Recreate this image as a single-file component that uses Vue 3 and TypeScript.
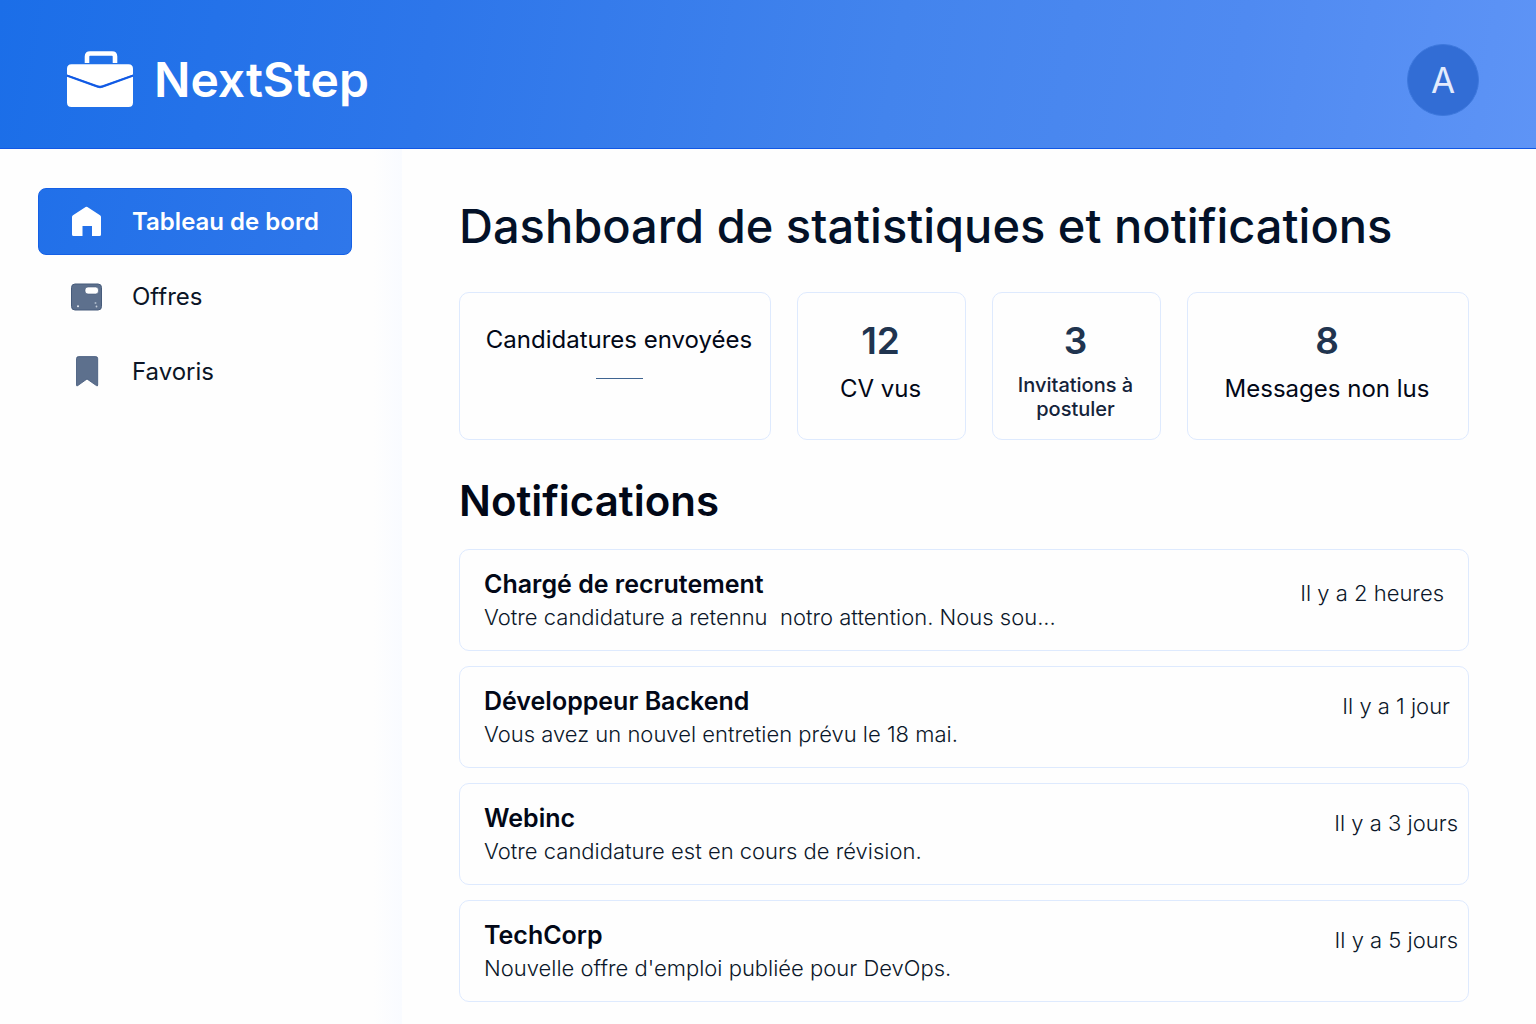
<script setup lang="ts">
interface NavItem {
  id: 'home' | 'offers' | 'favorites'
  label: string
  active: boolean
}

interface Stat {
  value: string | null
  label: string
  compact?: boolean
}

interface Notification {
  title: string
  text: string
  time: string
  inset: 'wide' | 'medium' | 'narrow'
}

const navItems: NavItem[] = [
  { id: 'home', label: 'Tableau de bord', active: true },
  { id: 'offers', label: 'Offres', active: false },
  { id: 'favorites', label: 'Favoris', active: false },
]

const stats: Stat[] = [
  { value: null, label: 'Candidatures envoyées' },
  { value: '12', label: 'CV vus' },
  { value: '3', label: 'Invitations à postuler', compact: true },
  { value: '8', label: 'Messages non lus' },
]

const notifications: Notification[] = [
  {
    title: 'Chargé de recrutement',
    text: 'Votre candidature a retennu\u00a0 notro attention. Nous sou...',
    time: 'Il y a 2 heures',
    inset: 'wide',
  },
  {
    title: 'Développeur Backend',
    text: 'Vous avez un nouvel entretien prévu le 18 mai.',
    time: 'Il y a 1 jour',
    inset: 'medium',
  },
  {
    title: 'Webinc',
    text: 'Votre candidature est en cours de révision.',
    time: 'Il y a 3 jours',
    inset: 'narrow',
  },
  {
    title: 'TechCorp',
    text: "Nouvelle offre d'emploi publiée pour DevOps.",
    time: 'Il y a 5 jours',
    inset: 'narrow',
  },
]
</script>

<template>
  <div class="app">
    <header class="topbar">
      <a class="brand" href="#">
        <svg class="brand-icon" viewBox="0 0 68 58" aria-hidden="true">
          <path
            d="M21 12V5.500Q21 2.500 24 2.500H46Q49 2.500 49 5.500V12"
            fill="none"
            stroke="#fff"
            stroke-width="4.600"
          />
          <path d="M5.500 13.200H62.500Q67 13.200 67 17.700V23.500L36.500 34.200Q34 35.100 31.500 34.200L1 23.500V17.700Q1 13.200 5.500 13.200Z" fill="#fff" />
          <path d="M1 25.700L31.500 36.700Q34 37.600 36.500 36.700L67 25.700V51.500Q67 56 62.500 56H5.500Q1 56 1 51.500Z" fill="#fff" />
          <path d="M1 24.600L31.500 35.400Q34 36.300 36.500 35.400L67 24.600" fill="none" stroke="#1257e4" stroke-width="1.600" />
        </svg>
        <span class="brand-name">NextStep</span>
      </a>
      <button class="avatar" type="button" aria-label="Compte A">A</button>
    </header>

    <div class="layout">
      <nav class="sidebar" aria-label="Navigation principale">
        <a
          v-for="item in navItems"
          :key="item.id"
          class="nav-item"
          :class="{ active: item.active }"
          href="#"
          :aria-current="item.active ? 'page' : undefined"
        >
          <svg v-if="item.id === 'home'" class="nav-icon" viewBox="0 0 32 32" aria-hidden="true">
            <path
              d="M14.600 1Q15.500 .3 16.400 1L29 9.200Q30 9.900 30 11V28.500Q30 30 28.500 30H21V20H11.500V30H2.500Q1 30 1 28.500V11Q1 9.900 2 9.200Z"
              fill="#fff"
            />
          </svg>
          <svg v-else-if="item.id === 'offers'" class="nav-icon" viewBox="0 0 32 32" aria-hidden="true">
            <rect x=".5" y="3" width="30" height="26" rx="3.500" fill="#5d708d" stroke="#465b7b" />
            <rect x="14" y="6" width="13.500" height="7" rx="3" fill="#fff" stroke="#465b7b" stroke-width=".6" />
            <circle cx="7" cy="25.300" r="1" fill="#e6ebf2" />
            <circle cx="24.500" cy="22" r="1" fill="#a9b6c8" />
            <circle cx="25.500" cy="25.500" r=".9" fill="#c3ccd9" />
          </svg>
          <svg v-else class="nav-icon" viewBox="0 0 32 32" aria-hidden="true">
            <path
              d="M7.500 .6H24.700Q26.700 .6 26.700 2.600V29Q26.700 30.500 25.400 29.600L16 23L6.800 29.600Q5.500 30.500 5.500 29V2.600Q5.500 .6 7.500 .6Z"
              fill="#5d708d"
              stroke="#3f5678"
              stroke-width=".8"
            />
          </svg>
          <span>{{ item.label }}</span>
        </a>
      </nav>

      <main class="content">
        <h1>Dashboard de statistiques et notifications</h1>

        <section class="stats" aria-label="Statistiques">
          <article
            v-for="stat in stats"
            :key="stat.label"
            class="stat"
            :class="{ compact: stat.compact, empty: stat.value === null }"
          >
            <strong v-if="stat.value" class="stat-value">{{ stat.value }}</strong>
            <span class="stat-label">{{ stat.label }}</span>
            <span v-if="!stat.value" class="stat-dash"></span>
          </article>
        </section>

        <h2>Notifications</h2>

        <ul class="notifications">
          <li v-for="note in notifications" :key="note.title" class="notification" :class="note.inset">
            <div>
              <h3>{{ note.title }}</h3>
              <p>{{ note.text }}</p>
            </div>
            <time>{{ note.time }}</time>
          </li>
        </ul>
      </main>
    </div>
  </div>
</template>

<style>
body {
  margin: 0;
  background: #fefefe;
}
</style>

<style scoped>
.app {
  display: flex;
  flex-direction: column;
  min-height: 100vh;
  font-family: Inter, 'Liberation Sans', sans-serif;
  color: #020817;
}

.topbar {
  display: flex;
  align-items: center;
  justify-content: space-between;
  box-sizing: border-box;
  height: 149px;
  padding: 11px 57px 0 66px;
  border-bottom: 1px solid #1257e4;
  background: linear-gradient(100deg, #1b6ee8 0%, #2d76ea 28%, #4384ed 58%, #4f8af1 80%, #5e94f6 100%);
}

.brand {
  display: flex;
  align-items: center;
  gap: 20px;
  color: #fff;
  text-decoration: none;
}

.brand-icon {
  width: 68px;
  height: 58px;
}

.brand-name {
  font-size: 48px;
  font-weight: 600;
  line-height: 60px;
}

.avatar {
  width: 72px;
  height: 72px;
  padding: 0;
  border: 1px solid #3d78dd;
  border-radius: 50%;
  background: #326dd5;
  color: #e3ebfd;
  font-family: inherit;
  font-size: 35px;
  line-height: 70px;
}

.layout {
  display: flex;
  flex: 1;
}

.sidebar {
  display: flex;
  flex-direction: column;
  gap: 8px;
  flex: none;
  box-sizing: border-box;
  width: 402px;
  padding: 39px 50px 0 38px;
  background: linear-gradient(to right, #fefefe 93%, #f9fbff 100%);
}

.nav-item {
  display: flex;
  align-items: center;
  gap: 29px;
  box-sizing: border-box;
  height: 67px;
  padding: 0 32px;
  border: 1px solid transparent;
  border-radius: 8px;
  color: #0b1526;
  font-size: 24px;
  line-height: 32px;
  text-decoration: none;
  white-space: nowrap;
}

.nav-item.active {
  border-color: #1560e6;
  background: linear-gradient(105deg, #2170e9, #2f77ea);
  color: #fff;
  font-weight: 600;
}

.nav-icon {
  flex: none;
  width: 32px;
  height: 32px;
}

.content {
  flex: 1;
  min-width: 0;
  padding: 47px 67px 23px 57px;
}

h1 {
  margin: 0;
  color: #031128;
  font-size: 47px;
  font-weight: 500;
  line-height: 60px;
}

.stats {
  display: grid;
  grid-template-columns: 312fr 169fr 169fr 282fr;
  gap: 26px;
  margin-top: 36px;
}

.stat {
  display: flex;
  flex-direction: column;
  align-items: center;
  box-sizing: border-box;
  min-width: 0;
  min-height: 148px;
  padding: 26px 18px 16px 16px;
  border: 1px solid #deeafe;
  border-radius: 10px;
  text-align: center;
}

.stat-value {
  color: #20344f;
  font-size: 37px;
  font-weight: 600;
  line-height: 44px;
}

.stat-label {
  margin-top: 10px;
  font-size: 24px;
  line-height: 32px;
}

.compact .stat-label {
  color: #14233a;
  font-size: 20px;
  font-weight: 500;
  line-height: 24px;
}

.empty {
  padding-left: 26px;
}

.empty .stat-label {
  margin-top: 5px;
  white-space: nowrap;
}

.stat-dash {
  width: 47px;
  height: 1px;
  margin-top: 22px;
  background: #3f6491;
}

h2 {
  margin: 36px 0 0;
  font-size: 42px;
  font-weight: 600;
  line-height: 50px;
}

.notifications {
  display: flex;
  flex-direction: column;
  gap: 15px;
  margin: 23px 0 0;
  padding: 0;
  list-style: none;
}

.notification {
  display: flex;
  align-items: flex-start;
  justify-content: space-between;
  box-sizing: border-box;
  min-height: 102px;
  padding: 17px 10px 14px 24px;
  border: 1px solid #deeafe;
  border-radius: 10px;
}

.notification.medium {
  padding-right: 18px;
}

.notification.wide {
  padding-right: 24px;
}

h3 {
  margin: 0;
  font-size: 25px;
  font-weight: 600;
  line-height: 34px;
}

.notification p {
  margin: 0;
  color: #0b1729;
  font-size: 22px;
  font-weight: 300;
  line-height: 32px;
}

time {
  margin-top: 6px;
  color: #0b1729;
  font-size: 22px;
  font-weight: 300;
  line-height: 32px;
  white-space: nowrap;
}

.wide time {
  margin-top: 10px;
}
</style>
